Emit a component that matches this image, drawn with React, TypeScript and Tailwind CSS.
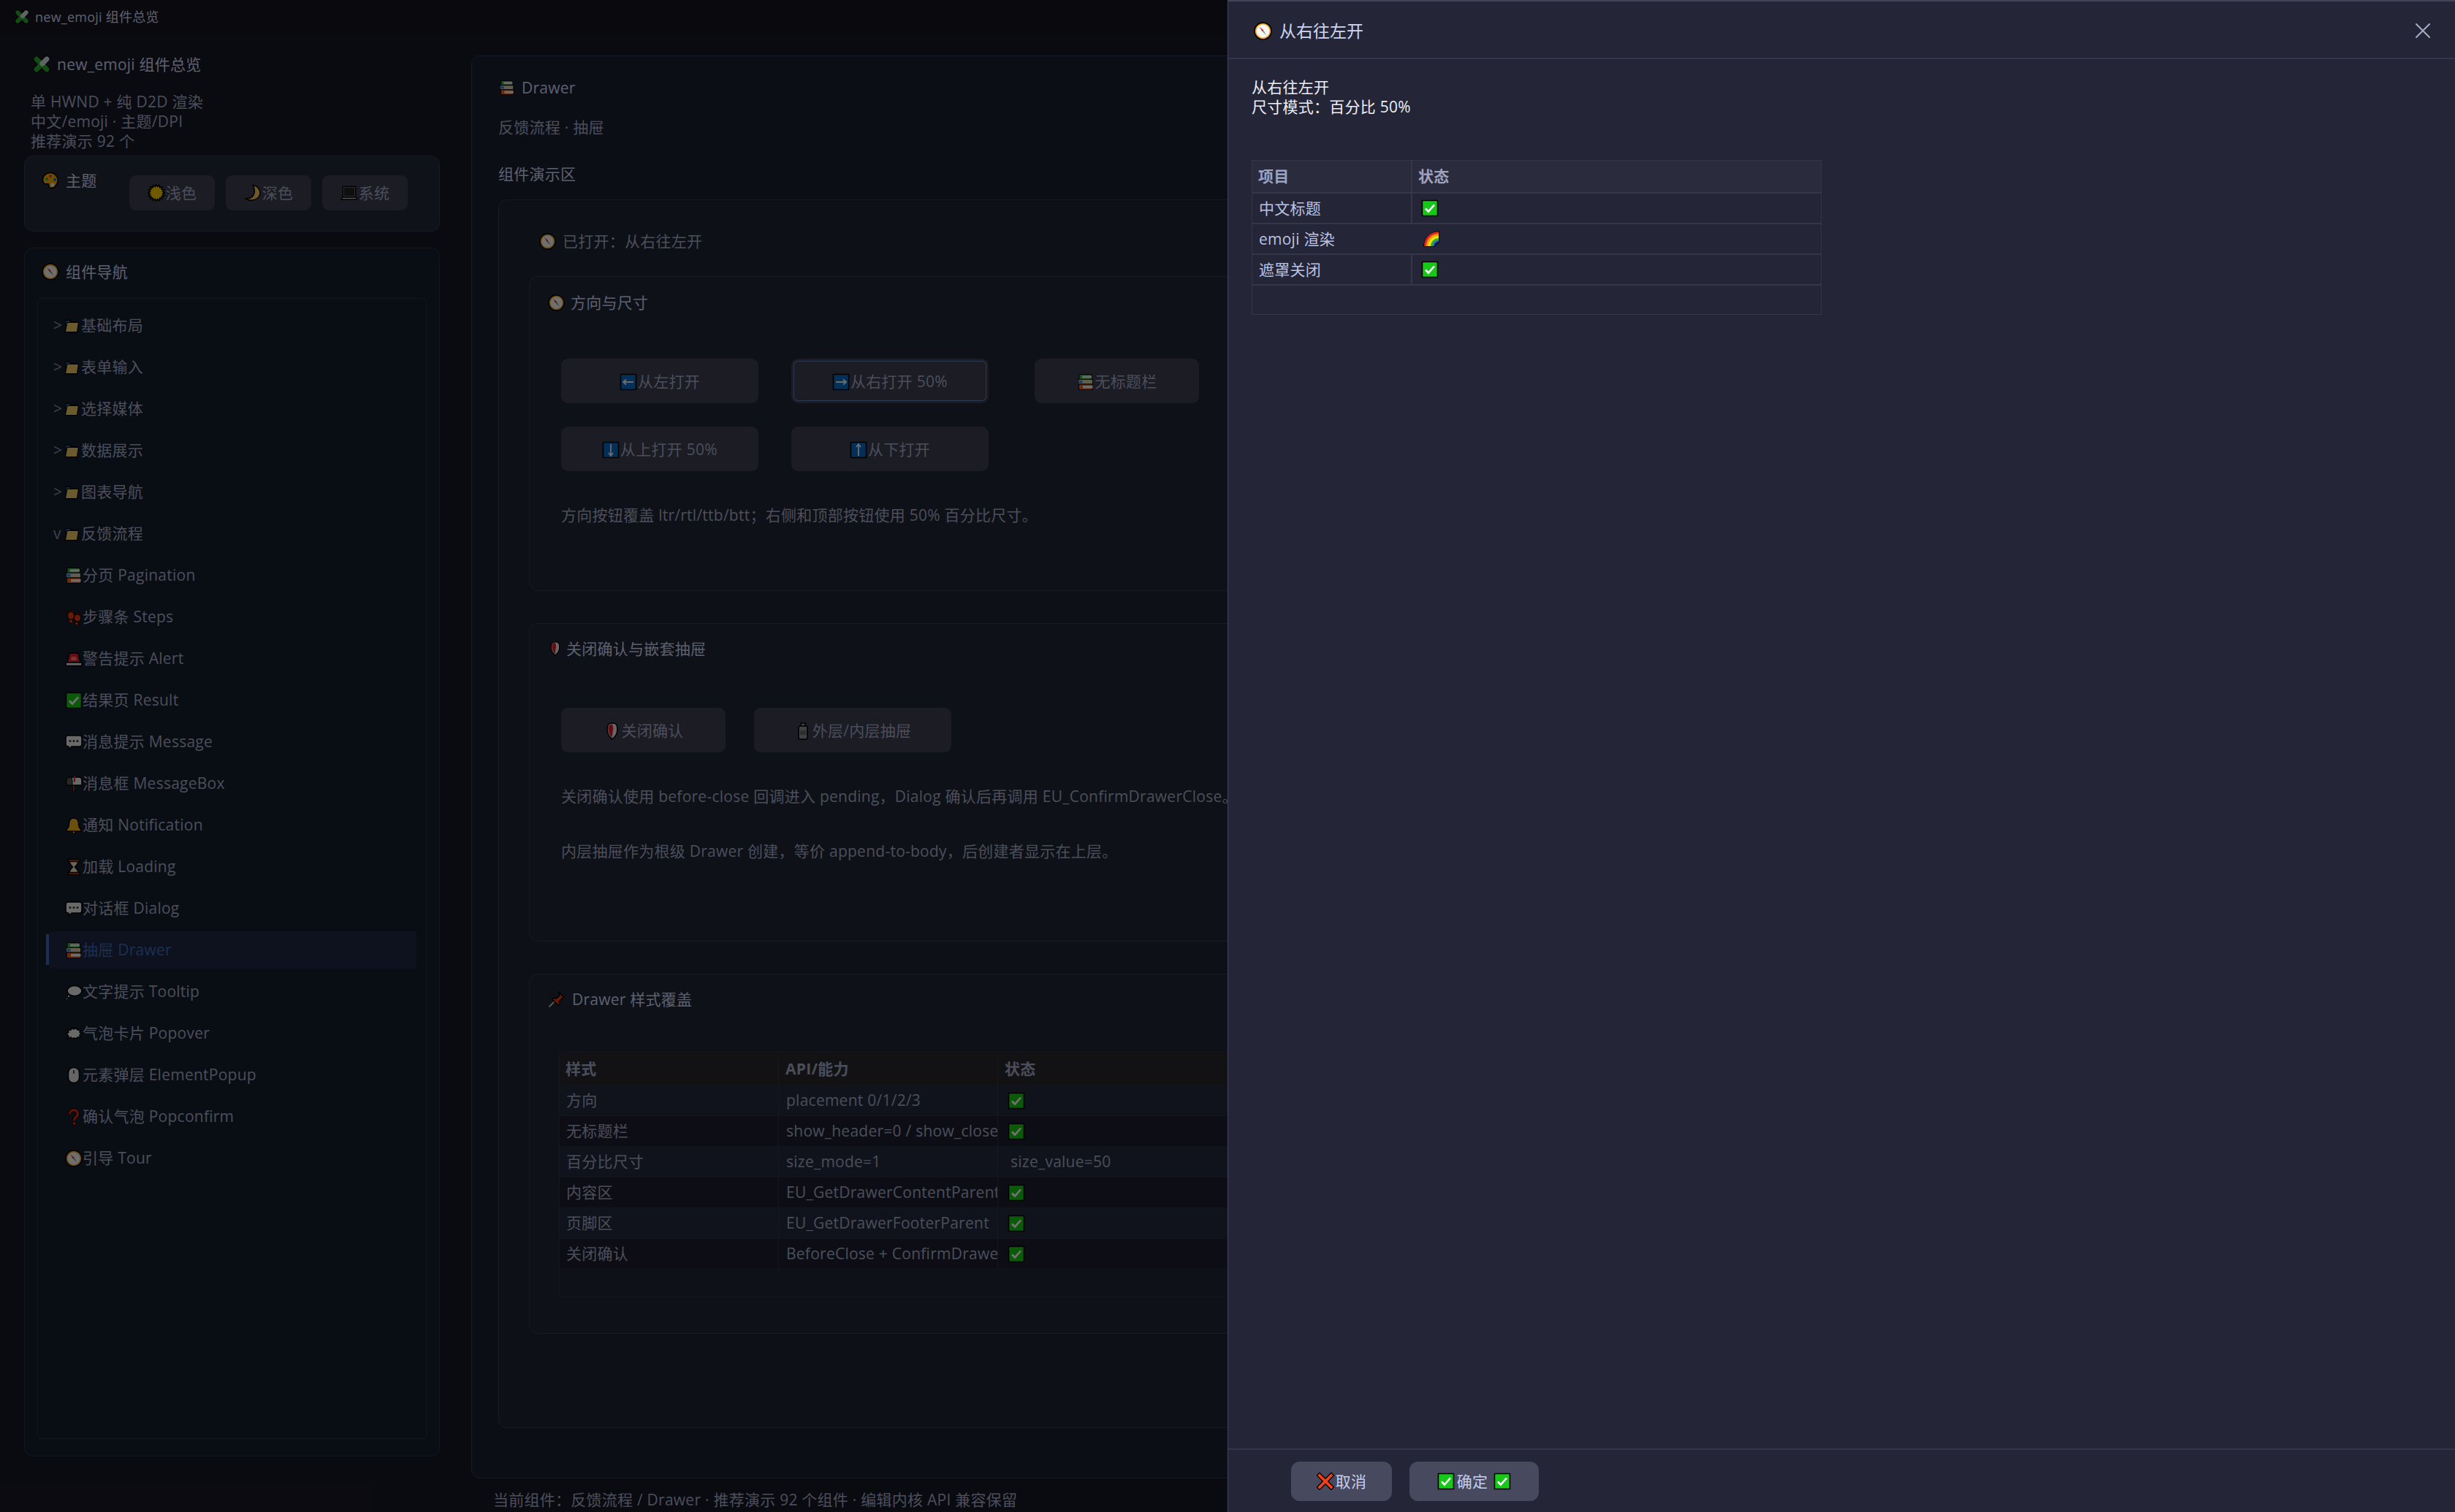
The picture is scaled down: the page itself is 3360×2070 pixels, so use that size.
import type { ReactNode } from "react";

const O = { stroke: "#000", strokeWidth: 1.6, strokeLinejoin: "round" as const };
const T = { stroke: "#000", strokeWidth: 1, strokeLinejoin: "round" as const };

function star(n: number, r1: number, r2: number) {
  const pts: string[] = [];
  for (let i = 0; i < n * 2; i++) {
    const r = i % 2 ? r2 : r1;
    const a = (Math.PI * i) / n;
    pts.push(`${(12 + r * Math.sin(a)).toFixed(2)},${(12 - r * Math.cos(a)).toFixed(2)}`);
  }
  return pts.join(" ");
}

const CheckBox = (
  <>
    <rect x="1.5" y="1.5" width="21" height="21" fill="#18c818" {...O} />
    <path d="M6 12.5l4 4 8-9" fill="none" stroke="#fff" strokeWidth="2.6" />
  </>
);

const Book = (
  <>
    <rect x="3" y="1.5" width="17" height="7" fill="#2fb048" {...T} />
    <rect x="7" y="3.5" width="13" height="3" fill="#f0f0e8" />
    <rect x="1.5" y="8.5" width="20" height="6.5" fill="#d8d0b0" {...T} />
    <rect x="1.5" y="10" width="6" height="3.5" fill="#3a88e0" />
    <rect x="2.5" y="15" width="19" height="7.5" fill="#e86020" {...T} />
    <rect x="8" y="17" width="13.5" height="3.5" fill="#f4f4ec" />
  </>
);

const Speech = (
  <>
    <path d="M4 3h16a3 3 0 013 3v9a3 3 0 01-3 3H9l-4 4v-4H4a3 3 0 01-3-3V6a3 3 0 013-3z" fill="#e8e8e8" {...O} />
    <circle cx="7" cy="10.5" r="1.5" fill="#333" />
    <circle cx="12" cy="10.5" r="1.5" fill="#333" />
    <circle cx="17" cy="10.5" r="1.5" fill="#333" />
  </>
);

const Arrow = (d: string) => (
  <>
    <rect x="1.5" y="1.5" width="21" height="21" fill="#0a6ac4" {...O} />
    <path d={d} fill="none" stroke="#e8f0ff" strokeWidth="1.8" />
  </>
);

const ICONS: Record<string, ReactNode> = {
  puzzle: (
    <>
      <path d="M5 5l14 14M19 5L5 19" stroke="#000" strokeWidth="9.5" strokeLinecap="round" />
      <path d="M5 5l14 14" stroke="#2ca82c" strokeWidth="7" strokeLinecap="round" />
      <path d="M12 12L5 19" stroke="#2ca82c" strokeWidth="7" strokeLinecap="round" />
      <path d="M13 11l6-6" stroke="#d0dce0" strokeWidth="7" strokeLinecap="round" />
    </>
  ),
  palette: (
    <>
      <path d="M12 1.5C5.5 1.5 1.5 6 1.5 11.5S5 17 8 16.5c2.5-.3 1 3 2.5 5 2 2 6 1 8.5-2 3-3.5 4-7.5 2.5-11S16.5 1.5 12 1.5z" fill="#f2a90c" {...O} />
      <circle cx="7" cy="10" r="2" fill="#2aa84a" />
      <circle cx="12" cy="6" r="2" fill="#d83a2a" />
      <circle cx="18" cy="11" r="2" fill="#1f5fd0" />
      <circle cx="15" cy="18" r="2.5" fill="#f0e8d8" />
    </>
  ),
  sun: <polygon points={star(16, 11.5, 8.5)} fill="#f8c800" {...O} />,
  moon: <path d="M12 1.5C20 3 24 10 21 16c-3 6-12 8-19 4 5 0 9-1.5 11-5 2-4 1.5-9-1-13.5z" fill="#f4c45a" {...O} />,
  laptop: (
    <>
      <rect x="3.5" y="3.5" width="17" height="14" fill="#1a1a1a" stroke="#000" strokeWidth="1.6" />
      <rect x="4.5" y="4.5" width="15" height="12" fill="#222" stroke="#777" strokeWidth="0.8" />
      <path d="M2.5 18h19l1.5 3H1z" fill="#c8c8c8" {...O} />
    </>
  ),
  compass: (
    <>
      <circle cx="12" cy="12" r="11" fill="#f5a81c" {...O} />
      <circle cx="12" cy="12" r="8.6" fill="#f6f6f2" />
      <path d="M7.5 6.5l3.5 6 2-1.500z" fill="#e02020" />
      <path d="M11 12.500l5.500 5-3.500-6z" fill="#8a8a8a" />
    </>
  ),
  folder: (
    <>
      <path d="M2 3h7l2 2.5h10v6H2z" fill="#2a7ab8" {...O} />
      <path d="M4.5 6.5h19L21 22.5H1.5z" fill="#f0c868" {...O} />
    </>
  ),
  books: Book,
  feet: (
    <g fill="#e03a18" stroke="#000" strokeWidth="1">
      <ellipse cx="8" cy="10" rx="4.5" ry="5.5" />
      <ellipse cx="8" cy="17.5" rx="2.5" ry="2.8" />
      <circle cx="3" cy="5" r="1.3" />
      <circle cx="6.5" cy="3" r="1.3" />
      <circle cx="10" cy="3.5" r="1.2" />
      <ellipse cx="17" cy="13" rx="4.5" ry="5" />
      <ellipse cx="16" cy="20.5" rx="2.3" ry="2.5" />
      <circle cx="22" cy="9" r="1.2" />
      <circle cx="18.5" cy="6.5" r="1.2" />
      <circle cx="15" cy="7" r="1.2" />
    </g>
  ),
  siren: (
    <>
      <path d="M6 4h12l3 13H3z" fill="#e81c2c" {...O} />
      <path d="M9 9h6l1 5H8z" fill="#ff7a70" />
      <rect x="1" y="17" width="22" height="4.5" rx="1" fill="#ddd" {...O} />
    </>
  ),
  check: CheckBox,
  speech: Speech,
  mailbox: (
    <>
      <rect x="10.5" y="13" width="3" height="10" fill="#8a3a1a" stroke="#000" strokeWidth="0.8" />
      <path d="M6 3h13a4 4 0 014 4v7H2V7a4 4 0 014-4z" fill="#e8e8e8" {...O} />
      <path d="M2 7a4 4 0 018 0v7H2z" fill="#555" stroke="#000" strokeWidth="1" />
      <rect x="12" y="1.5" width="2" height="8" fill="#e02020" />
    </>
  ),
  bell: (
    <>
      <path d="M12 2c-4.5 0-6.5 3.5-6.5 8 0 4-1.5 6-3.5 7.5V20h20v-2.5C20 16 18.5 14 18.5 10 18.5 5.5 16.5 2 12 2z" fill="#f0b020" {...O} />
      <circle cx="12" cy="21.5" r="2" fill="#c08010" stroke="#000" strokeWidth="1" />
    </>
  ),
  hourglass: (
    <>
      <path d="M6 4h12c0 5-3.5 6.5-4.5 8 1 1.5 4.5 3 4.5 8H6c0-5 3.5-6.5 4.5-8C9.5 10.5 6 9 6 4z" fill="#f0e0c0" {...O} />
      <rect x="4" y="1.5" width="16" height="3" fill="#e03a20" {...O} />
      <rect x="4" y="19.5" width="16" height="3" fill="#e03a20" {...O} />
    </>
  ),
  thought: (
    <>
      <ellipse cx="13" cy="10.5" rx="10" ry="7" fill="#e8e8e8" {...O} />
      <circle cx="5" cy="18" r="1.8" fill="#e8e8e8" stroke="#000" strokeWidth="1" />
      <circle cx="2.5" cy="21.5" r="1.1" fill="#e8e8e8" stroke="#000" strokeWidth="0.8" />
    </>
  ),
  anger: (
    <path
      d="M2 12l3-2-1-3 4 0 1-3 3 2 3-2 2 3 4 0-1 3 3 2-3 2 1 3-4 0-2 2-3-1-3 1-1-2-5 3 2-4z"
      fill="#e8e8e8"
      {...O}
    />
  ),
  mouse: (
    <>
      <rect x="4.5" y="1.5" width="15" height="21" rx="7" fill="#e0e0e0" {...O} />
      <rect x="11" y="5" width="2" height="5" rx="1" fill="#444" />
    </>
  ),
  question: (
    <>
      <path d="M6.5 8c0-7 11-7 11 0 0 4-5 4-5 9" fill="none" stroke="#000" strokeWidth="5" />
      <circle cx="12.5" cy="21" r="2.5" fill="#e82a10" stroke="#000" strokeWidth="1" />
      <path d="M6.5 8c0-7 11-7 11 0 0 4-5 4-5 9" fill="none" stroke="#e82a10" strokeWidth="3" />
    </>
  ),
  left: Arrow("M19 12H5m4-3.5L5 12l4 3.5"),
  right: Arrow("M5 12h14m-4-3.5l4 3.5-4 3.5"),
  down: Arrow("M12 4v16m-3-4l3 4 3-4"),
  up: Arrow("M12 20V4M9 8l3-4 3 4"),
  shield: (
    <>
      <path d="M12 1c5 0 7 2 7 8 0 6-3 11-7 14-4-3-7-8-7-14 0-6 2-8 7-8z" fill="#e4e4e4" {...O} />
      <path d="M12 2.5c-4 0-5.5 2-5.5 6.5 0 5 2.5 9 5 12 1-4 .5-7 1.5-10 .8-3 0-6-1-8.5z" fill="#e01c2c" />
    </>
  ),
  bottle: (
    <>
      <rect x="9" y="1" width="6" height="4" fill="#999" {...O} />
      <rect x="6" y="5" width="12" height="18" rx="2" fill="#8a9090" {...O} />
      <rect x="8" y="11" width="8" height="6" fill="#606868" />
    </>
  ),
  pin: (
    <>
      <path d="M1.5 22.5l9-9" stroke="#d0d0d0" strokeWidth="1.8" />
      <path d="M15 1l8 8-3 1-4 5 .5 4-2 1-8-8 1-2 4 .5 5-4z" fill="#e83a10" {...O} />
    </>
  ),
  cross: (
    <>
      <path d="M4 4l16 16M20 4L4 20" stroke="#000" strokeWidth="6.5" strokeLinecap="square" />
      <path d="M4 4l16 16M20 4L4 20" stroke="#f04018" strokeWidth="3.8" strokeLinecap="square" />
    </>
  ),
  rainbow: (
    <>
      <path d="M23 23H1A22 22 0 0123 1z" fill="#000" />
      <path d="M22 22H2A20 20 0 0122 2z" fill="#e8241c" />
      <path d="M22 22H5A17 17 0 0122 5z" fill="#f4a010" />
      <path d="M22 22H8A14 14 0 0122 8z" fill="#f4e010" />
      <path d="M22 22H11A11 11 0 0122 11z" fill="#30b030" />
      <path d="M22 22H14A8 8 0 0122 14z" fill="#3050e0" />
      <path d="M23 23H16A7 7 0 0123 16z" fill="#000" />
      <path d="M24 24H17A7 7 0 0124 17z" fill="#242637" />
    </>
  ),
};

function Emoji({ name, size = 24 }: { name: string; size?: number }) {
  return (
    <svg viewBox="0 0 24 24" width={size} height={size} className="shrink-0">
      {ICONS[name]}
    </svg>
  );
}

const GROUPS = ["基础布局", "表单输入", "选择媒体", "数据展示", "图表导航"];
const ITEMS = [
  ["books", "分页 Pagination"],
  ["feet", "步骤条 Steps"],
  ["siren", "警告提示 Alert"],
  ["check", "结果页 Result"],
  ["speech", "消息提示 Message"],
  ["mailbox", "消息框 MessageBox"],
  ["bell", "通知 Notification"],
  ["hourglass", "加载 Loading"],
  ["speech", "对话框 Dialog"],
  ["books", "抽屉 Drawer"],
  ["thought", "文字提示 Tooltip"],
  ["anger", "气泡卡片 Popover"],
  ["mouse", "元素弹层 ElementPopup"],
  ["question", "确认气泡 Popconfirm"],
  ["compass", "引导 Tour"],
];

const STYLE_ROWS = [
  ["方向", "placement 0/1/2/3", ""],
  ["无标题栏", "show_header=0 / show_close=0", ""],
  ["百分比尺寸", "size_mode=1", "size_value=50"],
  ["内容区", "EU_GetDrawerContentParent", ""],
  ["页脚区", "EU_GetDrawerFooterParent", ""],
  ["关闭确认", "BeforeClose + ConfirmDrawerClose", ""],
];

function GroupRow({ label, open }: { label: string; open?: boolean }) {
  return (
    <div className="h-[57px] flex items-center ml-[15px] w-[503px] pl-[6px]">
      <span className="w-[15px] text-[#8a8ea4]">{open ? "v" : ">"}</span>
      <Emoji name="folder" size={20} />
      <span className="ml-[3px] text-[#a6adc8]">{label}</span>
    </div>
  );
}

function ItemRow({ icon, label }: { icon: string; label: string }) {
  const active = label.includes("Drawer");
  if (active) {
    return (
      <div className="h-[57px] flex items-center ml-[15px] w-[503px]">
        <div className="relative h-[51px] w-full flex items-center pl-[22px] rounded-[4px] bg-[#1d2844] text-[#3f69b8]">
          <div className="absolute left-[-4px] top-[4px] bottom-[5px] w-[4px] bg-[#3f69b8]" />
          <Emoji name={icon} />
          <span>{label}</span>
        </div>
      </div>
    );
  }
  return (
    <div className="h-[57px] flex items-center ml-[15px] w-[503px] pl-[22px] text-[#a6adc8]">
      <Emoji name={icon} />
      <span>{label}</span>
    </div>
  );
}

function DimButton({ icon, label, width, focus }: { icon: string; label: string; width: string; focus?: boolean }) {
  return (
    <button
      className={`${width} h-[61px] pt-[2px] rounded-[9px] bg-[#3c3e50] text-[#a6adc8] flex items-center justify-center gap-[1px] ${focus ? "outline-[1.5px] outline-[#6580bc] -outline-offset-4" : ""}`}
    >
      <Emoji name={icon} />
      <span>{label}</span>
    </button>
  );
}

function StyleTable() {
  return (
    <div className="mt-[58px] ml-[15px] mr-[24px] border-l border-[#30344a]">
      <div className="flex h-[46px] items-center bg-[#28292f] font-bold text-[#a6adc8] border-y border-[#2a2e40]">
        <div className="w-[300px] pl-[8px] border-r border-[#30344a] h-full flex items-center">样式</div>
        <div className="w-[300px] pl-[9px] border-r border-[#30344a] h-full flex items-center">API/能力</div>
        <div className="pl-[9px]">状态</div>
      </div>
      {STYLE_ROWS.map((r, i) => (
        <div
          key={r[0]}
          className={`flex h-[42px] items-center text-[#a6adc8] border-b border-[#2a2e40] ${i % 2 ? "bg-[#1e2030]" : "bg-[#252a3c]"}`}
        >
          <div className="w-[300px] pl-[9px] h-full flex items-center border-r border-[#30344a]">{r[0]}</div>
          <div className="w-[300px] pl-[10px] h-full flex items-center border-r border-[#30344a] overflow-hidden whitespace-nowrap">
            {r[1]}
          </div>
          {r[2] ? (
            <div className="pl-[17px]">{r[2]}</div>
          ) : (
            <div className="pl-[13px]">
              <Emoji name="check" />
            </div>
          )}
        </div>
      ))}
      <div className="h-[37px] border-b border-[#2a2e40]" />
    </div>
  );
}

function DrawerTable() {
  const rows: [string, string, boolean][] = [
    ["中文标题", "check", true],
    ["emoji 渲染", "rainbow", false],
    ["遮罩关闭", "check", true],
  ];
  return (
    <div className="mt-[59px] w-[780px] border border-[#353749] text-[#bcc2e2]">
      <div className="flex h-[45px] bg-[#2a2c3e] border-b-2 border-[#353749] font-bold text-[#9ea2c0]">
        <div className="w-[219px] pl-[8px] flex items-center border-r-2 border-[#353749]">项目</div>
        <div className="pl-[8px] flex items-center">状态</div>
      </div>
      {rows.map(([name, icon, line]) => (
        <div key={name} className="flex h-[42px] border-b-2 border-[#353749]">
          <div className={`w-[219px] pl-[9px] flex items-center ${line ? "border-r-2 border-[#353749]" : ""}`}>{name}</div>
          <div className={`flex items-center ${line ? "pl-[12px]" : "pl-[14px]"}`}>
            <Emoji name={icon} />
          </div>
        </div>
      ))}
      <div className="h-[39px]" />
    </div>
  );
}

export default function App() {
  return (
    <div className="relative w-[3360px] h-[2070px] overflow-hidden flex flex-col bg-[#181826] text-[21px] leading-[27px] tracking-[0.25px] font-['Open_Sans','Noto_Sans_CJK_SC',sans-serif]">
      {/* title bar */}
      <div className="h-[46px] shrink-0 flex items-center pl-[20px] gap-[8px] text-[18px] text-[#cdd6f4] bg-[#161620]">
        <Emoji name="puzzle" size={20} />
        <span>new_emoji 组件总览</span>
      </div>

      <div className="flex flex-1 min-h-0">
        {/* sidebar */}
        <aside className="w-[645px] shrink-0 pl-[33px] flex flex-col">
          <div className="mt-[28px] pl-[12px] flex items-center gap-[9px] text-[#cdd6f4] h-[28px]">
            <Emoji name="puzzle" />
            <span>new_emoji 组件总览</span>
          </div>
          <div className="mt-[24px] pl-[9px] text-[#a6adc8]">
            <div>单 HWND + 纯 D2D 渲染</div>
            <div>中文/emoji · 主题/DPI</div>
            <div>推荐演示 92 个</div>
          </div>
          <div className="mt-[6px] w-[569px] h-[104px] rounded-[12px] border border-[#353a52] bg-[#232838] pl-[23px] pt-[19px] flex items-start">
            <div className="w-[120px] h-[28px] flex items-center gap-[9px] text-[#cdd6f4]">
              <Emoji name="palette" />
              <span>主题</span>
            </div>
            <div className="mt-[7px] flex gap-[15px]">
              {[
                ["sun", "浅色"],
                ["moon", "深色"],
                ["laptop", "系统"],
              ].map(([icon, label]) => (
                <button
                  key={label}
                  className="w-[117px] h-[48px] rounded-[9px] bg-[#3c3e50] text-[#a6adc8] flex items-center justify-center gap-[1px]"
                >
                  <Emoji name={icon} />
                  <span>{label}</span>
                </button>
              ))}
            </div>
          </div>
          <div className="mt-[22px] mb-[76px] w-[569px] flex-1 rounded-[12px] border border-[#2e3349] bg-[#161e2e] flex flex-col pt-[18px] min-h-0">
            <div className="pl-[23px] h-[28px] flex items-center gap-[9px] text-[#cdd6f4]">
              <Emoji name="compass" />
              <span>组件导航</span>
            </div>
            <div className="mt-[22px] mx-[17px] mb-[23px] flex-1 rounded-[6px] border border-[#2e3349] pt-[8px]">
              {GROUPS.map((g) => (
                <GroupRow key={g} label={g} />
              ))}
              <GroupRow label="反馈流程" open />
              {ITEMS.map(([icon, label]) => (
                <ItemRow key={label} icon={icon} label={label} />
              ))}
            </div>
          </div>
        </aside>

        {/* main column */}
        <main className="flex-1 min-w-0 pr-[40px] pt-[30px] flex flex-col">
          <div className="flex-1 min-h-0 rounded-[12px] border border-[#353a52] bg-[#1c2030] pl-[36px] pr-[30px] pt-[29px] flex flex-col">
            <div className="h-[28px] flex items-center gap-[9px] pl-[1px] text-[#cdd6f4]">
              <Emoji name="books" size={22} />
              <span>Drawer</span>
            </div>
            <div className="mt-[27px] text-[#a6adc8]">反馈流程 · 抽屉</div>
            <div className="mt-[37px] text-[#cdd6f4]">组件演示区</div>
            <div className="mt-[21px] mb-[68px] flex-1 rounded-[12px] border border-[#353a52] bg-[#1e2434] pl-[41px] pr-[40px] pt-[42px]">
              <div className="pl-[14px] h-[28px] flex items-center gap-[9px] text-[#a6adc8]">
                <Emoji name="compass" size={23} />
                <span>已打开：从右往左开</span>
              </div>

              <section className="mt-[34px] h-[431px] rounded-[12px] border border-[#353a52] bg-[#212634] pl-[25px] pt-[21px]">
                <div className="h-[28px] flex items-center gap-[8px] text-[#cdd6f4]">
                  <Emoji name="compass" size={23} />
                  <span>方向与尺寸</span>
                </div>
                <div className="mt-[63px] pl-[18px] flex">
                  <DimButton icon="left" label="从左打开" width="w-[270px]" />
                  <div className="ml-[45px]">
                    <DimButton icon="right" label="从右打开 50%" width="w-[270px]" focus />
                  </div>
                  <div className="ml-[63px]">
                    <DimButton icon="books" label="无标题栏" width="w-[225px]" />
                  </div>
                </div>
                <div className="mt-[32px] pl-[18px] flex gap-[45px]">
                  <DimButton icon="down" label="从上打开 50%" width="w-[270px]" />
                  <DimButton icon="up" label="从下打开" width="w-[270px]" />
                </div>
                <div className="mt-[47px] pl-[18px] text-[#a6adc8]">
                  方向按钮覆盖 ltr/rtl/ttb/btt；右侧和顶部按钮使用 50% 百分比尺寸。
                </div>
              </section>

              <section className="mt-[44px] h-[436px] rounded-[12px] border border-[#353a52] bg-[#212634] pl-[25px] pt-[20px]">
                <div className="h-[28px] flex items-center gap-[5px] text-[#cdd6f4]">
                  <Emoji name="shield" size={20} />
                  <span>关闭确认与嵌套抽屉</span>
                </div>
                <div className="mt-[67px] pl-[18px] flex gap-[39px]">
                  <DimButton icon="shield" label="关闭确认" width="w-[225px]" />
                  <DimButton icon="bottle" label="外层/内层抽屉" width="w-[270px]" />
                </div>
                <div className="mt-[47px] pl-[18px] text-[#a6adc8] whitespace-nowrap">
                  关闭确认使用 before-close 回调进入 pending，Dialog 确认后再调用 EU_ConfirmDrawerClose。
                </div>
                <div className="mt-[48px] pl-[18px] text-[#a6adc8]">
                  内层抽屉作为根级 Drawer 创建，等价 append-to-body，后创建者显示在上层。
                </div>
              </section>

              <section className="mt-[44px] h-[493px] rounded-[12px] border border-[#353a52] bg-[#212634] pl-[25px] pt-[20px]">
                <div className="h-[28px] flex items-center gap-[10px] text-[#cdd6f4]">
                  <Emoji name="pin" size={23} />
                  <span>Drawer 样式覆盖</span>
                </div>
                <StyleTable />
              </section>
            </div>
          </div>
          <div className="h-[46px] pt-[12px] pl-[30px] flex items-center text-[#a6adc8]">
            当前组件：反馈流程 / Drawer · 推荐演示 92 个组件 · 编辑内核 API 兼容保留
          </div>
        </main>
      </div>

      {/* drawer scrim */}
      <div className="absolute inset-0 bg-black/55" />

      {/* drawer */}
      <div className="absolute top-0 right-0 bottom-0 w-[1680px] flex flex-col bg-[#242637] border-l border-t-2 border-[#43455a]">
        <div className="h-[79px] shrink-0 flex items-center justify-between pt-[3px] pl-[35px] pr-[34px] border-b-2 border-[#33354a]">
          <div className="flex items-center gap-[10px] text-[23px] tracking-normal text-[#cdd6f4]">
            <Emoji name="compass" size={25} />
            <span>从右往左开</span>
          </div>
          <svg viewBox="0 0 20 20" width="20" height="20" stroke="#a6adc8" strokeWidth="2" strokeLinecap="round">
            <path d="M1 1l18 18M19 1L1 19" />
          </svg>
        </div>

        <div className="flex-1 min-h-0 pl-[32px] pt-[25px]">
          <div className="text-[#eceef8]">
            <div>从右往左开</div>
            <div>尺寸模式：百分比 50%</div>
          </div>
          <DrawerTable />
        </div>

        <div className="h-[87px] shrink-0 border-t-2 border-[#33354a] pl-[86px] pt-[16px] flex items-start gap-[24px] text-[#c6cdf0]">
          <button className="w-[138px] h-[54px] rounded-[12px] bg-[#474a5e] flex items-center justify-center gap-[2px]">
            <Emoji name="cross" />
            <span>取消</span>
          </button>
          <button className="w-[177px] h-[54px] rounded-[12px] bg-[#474a5e] flex items-center justify-center gap-[3px]">
            <Emoji name="check" />
            <span>确定</span>
            <span className="ml-[5px] flex">
              <Emoji name="check" />
            </span>
          </button>
        </div>
      </div>
    </div>
  );
}
